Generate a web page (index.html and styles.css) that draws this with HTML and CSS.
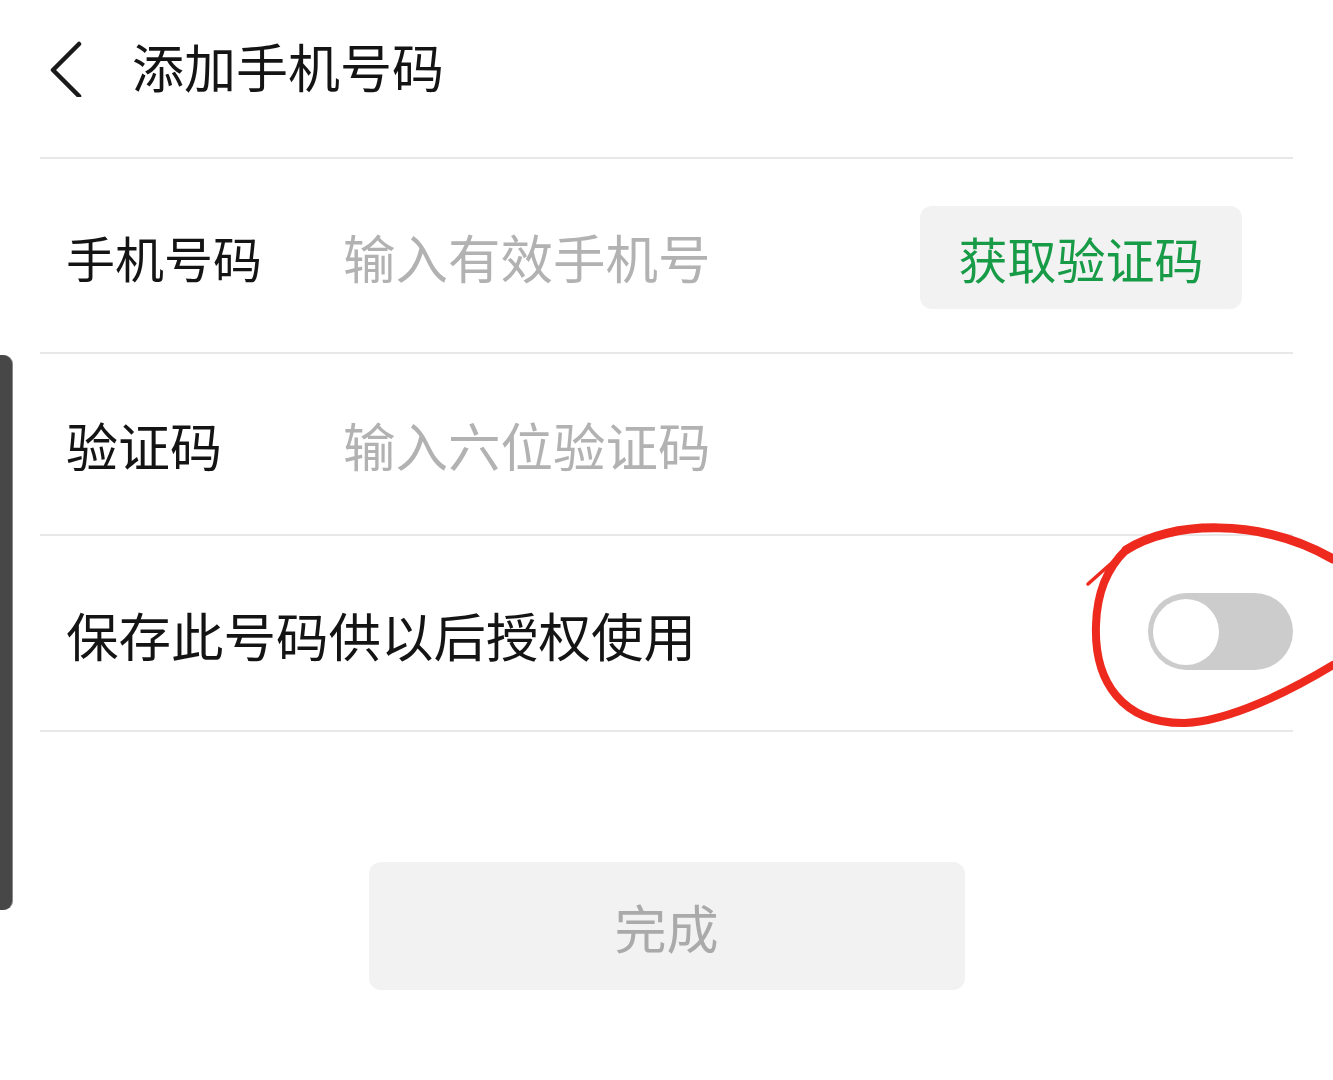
FILE: index.html
```html
<!DOCTYPE html>
<html lang="zh-CN">
<head>
<meta charset="utf-8">
<title>添加手机号码</title>
<link rel="stylesheet" href="styles.css">
</head>
<body>
<div class="page">
  <header class="topbar">
    <svg class="back" width="40" height="60" viewBox="0 0 40 60" aria-hidden="true">
      <polyline points="33,7 7,33 33,59" fill="none" stroke="#1a1a1a" stroke-width="4.5" stroke-linecap="round" stroke-linejoin="round"/>
    </svg>
    <h1 class="title">添加手机号码</h1>
  </header>
  <div class="list">
    <div class="row row-phone">
      <span class="label label-phone">手机号码</span>
      <input class="field" type="text" placeholder="输入有效手机号">
      <button class="code-btn" type="button">获取验证码</button>
    </div>
    <div class="row row-code">
      <span class="label">验证码</span>
      <input class="field" type="text" placeholder="输入六位验证码">
    </div>
    <div class="row row-save">
      <span class="label">保存此号码供以后授权使用</span>
      <div class="toggle"><div class="knob"></div></div>
    </div>
  </div>
  <div class="actions">
    <button class="done" type="button">完成</button>
  </div>
  <div class="side-bar"></div>
  <svg class="mark" width="253" height="220" viewBox="0 0 253 220" aria-hidden="true">
    <path d="M8 69 L44 37" fill="none" stroke="#ee2a1e" stroke-width="3.5" stroke-linecap="round"/>
    <path d="M46 35 C 90 6, 180 2, 253 44" fill="none" stroke="#ee2a1e" stroke-width="9" stroke-linecap="round"/>
    <path d="M253 150 C 210 176, 150 206, 105 208 C 42 209, 14 166, 16 110 C 17 76, 28 52, 46 35" fill="none" stroke="#ee2a1e" stroke-width="8" stroke-linecap="round"/>
  </svg>
</div>
</body>
</html>
```
FILE: styles.css
```css
html, body {
  margin: 0;
  padding: 0;
  background: #ffffff;
  overflow: hidden;
}
body {
  font-family: "Noto Sans CJK SC", "Noto Sans", sans-serif;
  color: #141414;
}
.page {
  position: relative;
  width: 1333px;
  height: 1080px;
  padding: 0 40px;
  box-sizing: border-box;
}
.topbar {
  display: flex;
  align-items: center;
  height: 157px;
  border-bottom: 2px solid #e8e8e8;
}
.back {
  margin-left: 6px;
  margin-top: -24px;
  flex: none;
}
.title {
  margin: -25px 0 0 46px;
  font-size: 52px;
  font-weight: 400;
  line-height: 1;
  color: #141414;
}
.row {
  display: flex;
  align-items: center;
  border-bottom: 2px solid #e8e8e8;
  padding-left: 26px;
}
.row-phone { height: 193px; }
.row-code { height: 180px; }
.row-save { height: 194px; justify-content: space-between; }
.label {
  font-size: 52px;
  line-height: 1;
  width: 277px;
  flex: none;
  white-space: nowrap;
  color: #141414;
  margin-top: 2px;
}
.label-phone {
  font-size: 49px;
}
.row-save .label {
  width: auto;
  font-size: 52.5px;
}
.field {
  flex: 1;
  min-width: 0;
  border: 0;
  outline: none;
  background: transparent;
  padding: 0;
  font-family: "Noto Sans CJK SC", "Noto Sans", sans-serif;
  font-size: 52.5px;
  color: #141414;
  margin-top: 0;
}
.field::placeholder {
  color: #b2b2b2;
}
.code-btn {
  flex: none;
  width: 322px;
  height: 103px;
  margin-right: 51px;
  border: 0;
  border-radius: 12px;
  background: #f2f2f2;
  color: #179b47;
  font-family: "Noto Sans CJK SC", "Noto Sans", sans-serif;
  font-size: 49px;
  padding: 0;
  margin-top: 3px;
}
.toggle {
  display: flex;
  align-items: center;
  width: 145px;
  height: 77px;
  box-sizing: border-box;
  padding: 5px;
  border-radius: 39px;
  background: #cccccc;
  margin-top: -3px;
}
.knob {
  width: 66px;
  height: 66px;
  border-radius: 50%;
  background: #ffffff;
}
.actions {
  display: flex;
  justify-content: center;
  padding-top: 130px;
}
.done {
  width: 596px;
  height: 128px;
  border: 0;
  border-radius: 12px;
  background: #f2f2f2;
  color: #aaaaaa;
  font-family: "Noto Sans CJK SC", "Noto Sans", sans-serif;
  font-size: 52px;
  padding: 0;
}
.side-bar {
  position: absolute;
  left: 0;
  top: 355px;
  width: 12px;
  height: 555px;
  background: #474747;
  border-radius: 0 9px 9px 0;
  box-shadow: 1px 0 0 #8a8a8a;
}
.mark {
  position: absolute;
  left: 1080px;
  top: 515px;
}
```
